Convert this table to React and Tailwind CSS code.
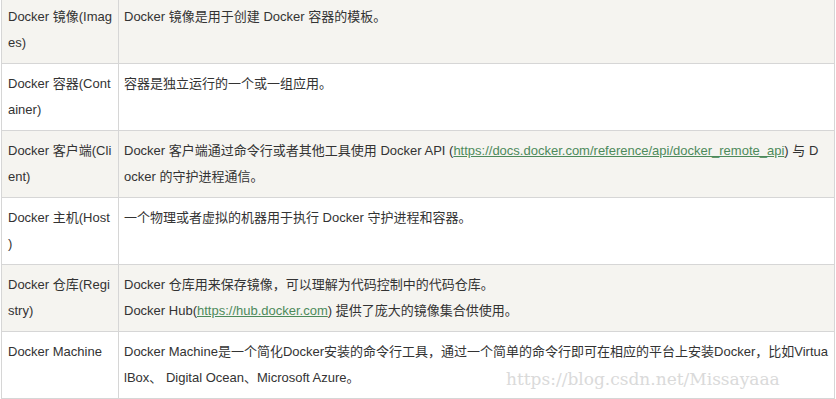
import React from 'react';

const link = 'text-[#4d8a5b] underline';

const rows = [
  { term: ['Docker 镜像(Imag', 'es)'], desc: ['Docker 镜像是用于创建 Docker 容器的模板。'] },
  { term: ['Docker 容器(Cont', 'ainer)'], desc: ['容器是独立运行的一个或一组应用。'] },
  {
    term: ['Docker 客户端(Cli', 'ent)'],
    desc: [
      <>
        Docker 客户端通过命令行或者其他工具使用 Docker API (
        <a className={link} href="#">https://docs.docker.com/reference/api/docker_remote_api</a>
        ) 与 D
      </>,
      'ocker 的守护进程通信。',
    ],
  },
  { term: ['Docker 主机(Host', ')'], desc: ['一个物理或者虚拟的机器用于执行 Docker 守护进程和容器。'] },
  {
    term: ['Docker 仓库(Regi', 'stry)'],
    desc: [
      'Docker 仓库用来保存镜像，可以理解为代码控制中的代码仓库。',
      <>
        Docker Hub(
        <a className={link} href="#">https://hub.docker.com</a>
        ) 提供了庞大的镜像集合供使用。
      </>,
    ],
  },
  {
    term: ['Docker Machine'],
    desc: [
      'Docker Machine是一个简化Docker安装的命令行工具，通过一个简单的命令行即可在相应的平台上安装Docker，比如Virtua',
      'lBox、 Digital Ocean、Microsoft Azure。',
    ],
  },
];

export default function App() {
  return (
    <div className="relative w-[836px] h-[399px] overflow-hidden bg-white">
      <table
        className="-mt-[4px] ml-[1px] w-[834px] border-collapse table-fixed text-[13px] leading-[26px] text-[#333]"
        style={{ fontFamily: '"Liberation Sans", Arial, "Noto Sans CJK SC", sans-serif' }}
      >
        <colgroup>
          <col className="w-[117px]" />
          <col />
        </colgroup>
        <tbody>
          {rows.map((row, i) => (
            <tr key={i} className={i % 2 === 0 ? 'bg-[#f5f4f0] h-[67px]' : 'bg-white h-[67px]'}>
              <td className="border border-[#d6d6d6] pl-[6px] pr-[2px] py-[7px] align-top whitespace-nowrap">
                {row.term.map((t, j) => (
                  <div key={j}>{t}</div>
                ))}
              </td>
              <td className="border border-[#d6d6d6] pl-[5px] pr-[2px] py-[7px] align-top whitespace-nowrap">
                {row.desc.map((d, j) => (
                  <div key={j}>{d}</div>
                ))}
              </td>
            </tr>
          ))}
        </tbody>
      </table>
      <div
        className="absolute left-[506px] top-[367px] text-[17px] leading-[24px] text-[#dadada]"
        style={{ fontFamily: '"DejaVu Serif", "Liberation Serif", serif' }}
      >
        https://blog.csdn.net/Missayaaa
      </div>
    </div>
  );
}
